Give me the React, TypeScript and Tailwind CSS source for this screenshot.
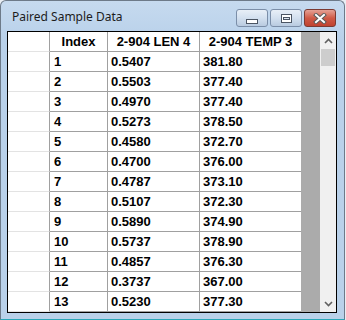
import React from "react";

const rows: [string, string, string][] = [
  ["1", "0.5407", "381.80"],
  ["2", "0.5503", "377.40"],
  ["3", "0.4970", "377.40"],
  ["4", "0.5273", "378.50"],
  ["5", "0.4580", "372.70"],
  ["6", "0.4700", "376.00"],
  ["7", "0.4787", "373.10"],
  ["8", "0.5107", "372.30"],
  ["9", "0.5890", "374.90"],
  ["10", "0.5737", "378.90"],
  ["11", "0.4857", "376.30"],
  ["12", "0.3737", "367.00"],
  ["13", "0.5230", "377.30"],
];

const cellFont = { fontFamily: '"Liberation Sans", Arial, sans-serif' };

function CapBtn({ kind }: { kind: "min" | "max" | "close" }) {
  if (kind === "close") {
    return (
      <div className="w-[32px] h-[18px] rounded-[3px] border border-[#7b3a32] bg-gradient-to-b from-[#e4a195] via-[#cf5a47] to-[#c0422f] flex items-center justify-center">
        <svg width="14" height="11" viewBox="0 0 14 11">
          <path d="M3 2 L11 9 M11 2 L3 9" stroke="#5a5a5a" strokeWidth="4" strokeLinecap="square" />
          <path d="M3 2 L11 9 M11 2 L3 9" stroke="#ffffff" strokeWidth="2" strokeLinecap="square" />
        </svg>
      </div>
    );
  }
  return (
    <div className="w-[32px] h-[18px] rounded-[3px] border border-[#7b8ea8] bg-gradient-to-b from-[#e8eff7] via-[#d3e0ef] to-[#b9cbe0] flex items-center justify-center">
      {kind === "min" ? (
        <div className="w-[12px] h-[5px] mt-[6px] bg-white border border-[#4b5563]" />
      ) : (
        <div className="w-[11px] h-[9px] bg-white border border-[#4b5563] flex items-center justify-center">
          <div className="w-[7px] h-[3px] bg-[#dde6f0] border border-[#4b5563]" />
        </div>
      )}
    </div>
  );
}

export default function App() {
  return (
    <div className="w-[346px] h-[320px] bg-[#e9eef4]">
      <div className="w-[345px] h-[320px] bg-gradient-to-b from-[#c6daef] to-[#b9d1ea] to-[12%] border border-[#6d7a89] border-b-[#2aa7b8] rounded-t-[6px] flex flex-col">
        <div className="h-[30px] flex items-start pl-[11px] pr-[8px]">
          <div
            className="mt-[8px] text-[12px] text-[#1c1c1c] leading-[16px]"
            style={{ fontFamily: '"Noto Sans", "Open Sans", sans-serif' }}
          >
            Paired Sample Data
          </div>
          <div className="ml-auto flex gap-[2px] mt-[8px]">
            <CapBtn kind="min" />
            <CapBtn kind="max" />
            <CapBtn kind="close" />
          </div>
        </div>
        <div className="ml-[6px] w-[330px] h-[282px] border border-black bg-white flex">
          <div className="flex flex-col">
            <div className="flex h-[20px]">
              <div className="w-[42px] bg-white border-b border-[#e3e3e3] border-r border-r-[#a0a0a0]" />
              <div className="w-[58px] border-b border-r border-[#a0a0a0] flex items-center justify-center font-bold text-[13px] text-black" style={cellFont}>Index</div>
              <div className="w-[92px] border-b border-r border-[#a0a0a0] flex items-center justify-center font-bold text-[13px] text-black" style={cellFont}>2-904 LEN 4</div>
              <div className="w-[101px] border-b border-[#a0a0a0] flex items-center justify-center font-bold text-[13px] text-black" style={cellFont}>2-904 TEMP 3</div>
            </div>
            {rows.map((r, i) => (
              <div key={i} className="flex h-[20px]">
                <div className="w-[42px] border-b border-[#e3e3e3] border-r border-r-[#a0a0a0]" />
                <div className="w-[58px] border-b border-r border-[#a0a0a0] flex items-center pl-[4px] font-bold text-[13px] text-black" style={cellFont}>{r[0]}</div>
                <div className="w-[92px] border-b border-r border-[#a0a0a0] flex items-center pl-[3px] font-bold text-[13px] text-black" style={cellFont}>{r[1]}</div>
                <div className="w-[101px] border-b border-[#a0a0a0] flex items-center pl-[3px] font-bold text-[13px] text-black" style={cellFont}>{r[2]}</div>
              </div>
            ))}
          </div>
          <div className="w-[19px] bg-[#ababab]" />
          <div className="w-[16px] bg-[#f0f0f0] flex flex-col">
            <div className="h-[17px] flex items-center justify-center">
              <svg width="9" height="6" viewBox="0 0 9 6">
                <path d="M1 5 L4.5 1.5 L8 5" stroke="#606060" strokeWidth="1.6" fill="none" />
              </svg>
            </div>
            <div className="h-[17px] mx-[1px] bg-[#cdcdcd]" />
            <div className="flex-1" />
            <div className="h-[17px] flex items-center justify-center">
              <svg width="9" height="6" viewBox="0 0 9 6">
                <path d="M1 1 L4.5 4.5 L8 1" stroke="#606060" strokeWidth="1.6" fill="none" />
              </svg>
            </div>
          </div>
        </div>
      </div>
    </div>
  );
}
